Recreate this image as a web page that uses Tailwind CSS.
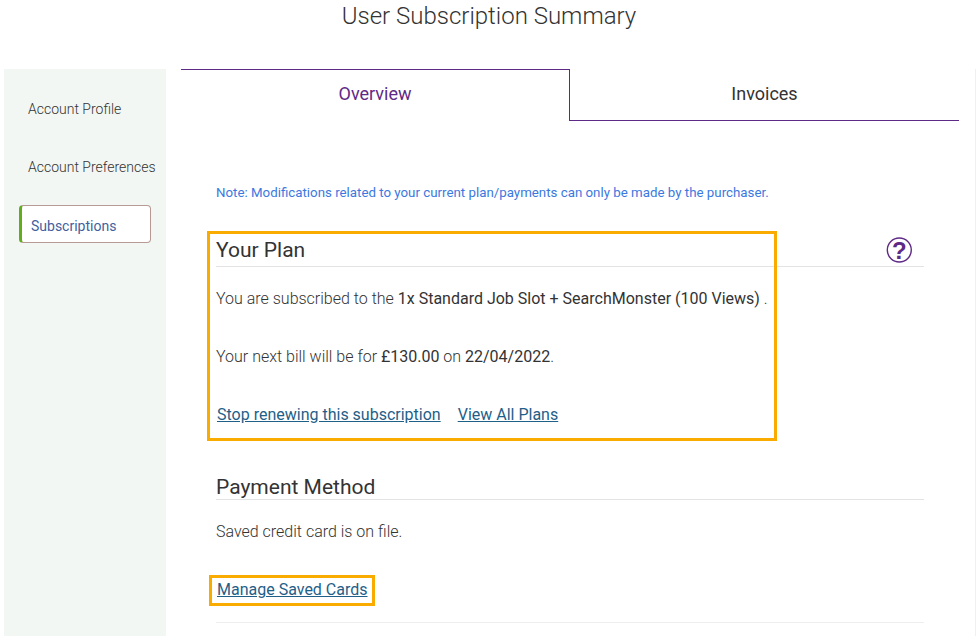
<!DOCTYPE html>
<html><head><meta charset="utf-8"><script src="https://cdn.jsdelivr.net/npm/@tailwindcss/browser@4"></script></head>
<body class="bg-white overflow-hidden">
<div class="h-[636px] w-[977px] overflow-hidden font-['Roboto',sans-serif] text-[#333] relative">
  <div class="absolute left-[975px] top-[69px] bottom-0 w-px bg-[#f0f0f0]"></div>
  <h1 class="h-[69px] pt-[1px] pl-[1px] text-center text-[24px] leading-[30px] font-light text-[#333]">User Subscription Summary</h1>
  <div class="flex">
    <aside class="ml-1 w-[162px] h-[567px] bg-[#f3f7f4] pt-[31px] text-[14px] font-light shrink-0">
      <div class="pl-6 h-[18px] leading-[18px]">Account Profile</div>
      <div class="pl-6 mt-10 h-[18px] leading-[18px]">Account Preferences</div>
      <div class="ml-[15px] mt-[29px] w-[132px] h-[38px] bg-white border border-[#b89a94] border-l-[3px] border-l-[#62ad1f] rounded-[4px] pl-[9px] leading-[40px] text-[#3f5f9e] font-normal">Subscriptions</div>
    </aside>
    <main class="ml-[15px] w-[778px] relative">
      <div class="flex h-[52px] text-[18px]">
        <div class="w-[389px] border-t border-r border-[#5f2a86] text-center text-[#5f2a86] leading-[48px]">Overview</div>
        <div class="w-[389px] border-b border-[#5f2a86] text-center leading-[50px]">Invoices</div>
      </div>
      <div class="pl-[35px] w-[743px]">
        <p class="mt-[63px] text-[13.3px] leading-[18px] text-[#3b78e0]">Note: Modifications related to your current plan/payments can only be made by the purchaser.</p>
        <div class="mt-[36px] h-[29px] border-b border-[#e3e3e3] relative">
          <h2 class="text-[21px] leading-[24px]">Your Plan</h2>
          <svg class="absolute left-[670px] top-[-1px]" width="26" height="26" viewBox="0 0 26 26"><circle cx="13.3" cy="13" r="12" fill="white" stroke="#5f2a86" stroke-width="1.4"/><text x="13.3" y="21.5" text-anchor="middle" font-family="Liberation Sans" font-weight="700" font-size="24" fill="#5f2a86">?</text></svg>
        </div>
        <p class="mt-[22px] text-[16px] leading-[20px] font-light">You are subscribed to the <span class="font-normal">1x Standard Job Slot + SearchMonster (100 Views)</span> .</p>
        <p class="mt-[38px] text-[16px] leading-[20px] font-light">Your next bill will be for <span class="font-normal">£130.00</span> on <span class="font-normal">22/04/2022</span>.</p>
        <div class="mt-[38px] text-[16px] leading-[20px] text-[#1f6088] flex gap-[18px] pl-px">
          <a class="underline">Stop renewing this subscription</a><a class="underline -ml-px">View All Plans</a>
        </div>
        <div class="mt-[48px] h-[27px] border-b border-[#e3e3e3]"><h2 class="text-[21px] leading-[28px]">Payment Method</h2></div>
        <p class="mt-[22px] text-[16px] leading-[20px] font-light">Saved credit card is on file.</p>
        <div class="mt-[38px] text-[16px] leading-[20px] text-[#1f6088] pl-px"><a class="underline">Manage Saved Cards</a></div>
        <div class="mt-[22px] border-b border-[#eeeeee]"></div>
      </div>
      <div class="absolute left-[26px] top-[162px] w-[570px] h-[210px] border-[3px] border-[#f9ab00]"></div>
      <div class="absolute left-[28px] top-[506px] w-[166px] h-[31px] border-[3px] border-[#f9ab00]"></div>
    </main>
  </div>
</div>
</body></html>
